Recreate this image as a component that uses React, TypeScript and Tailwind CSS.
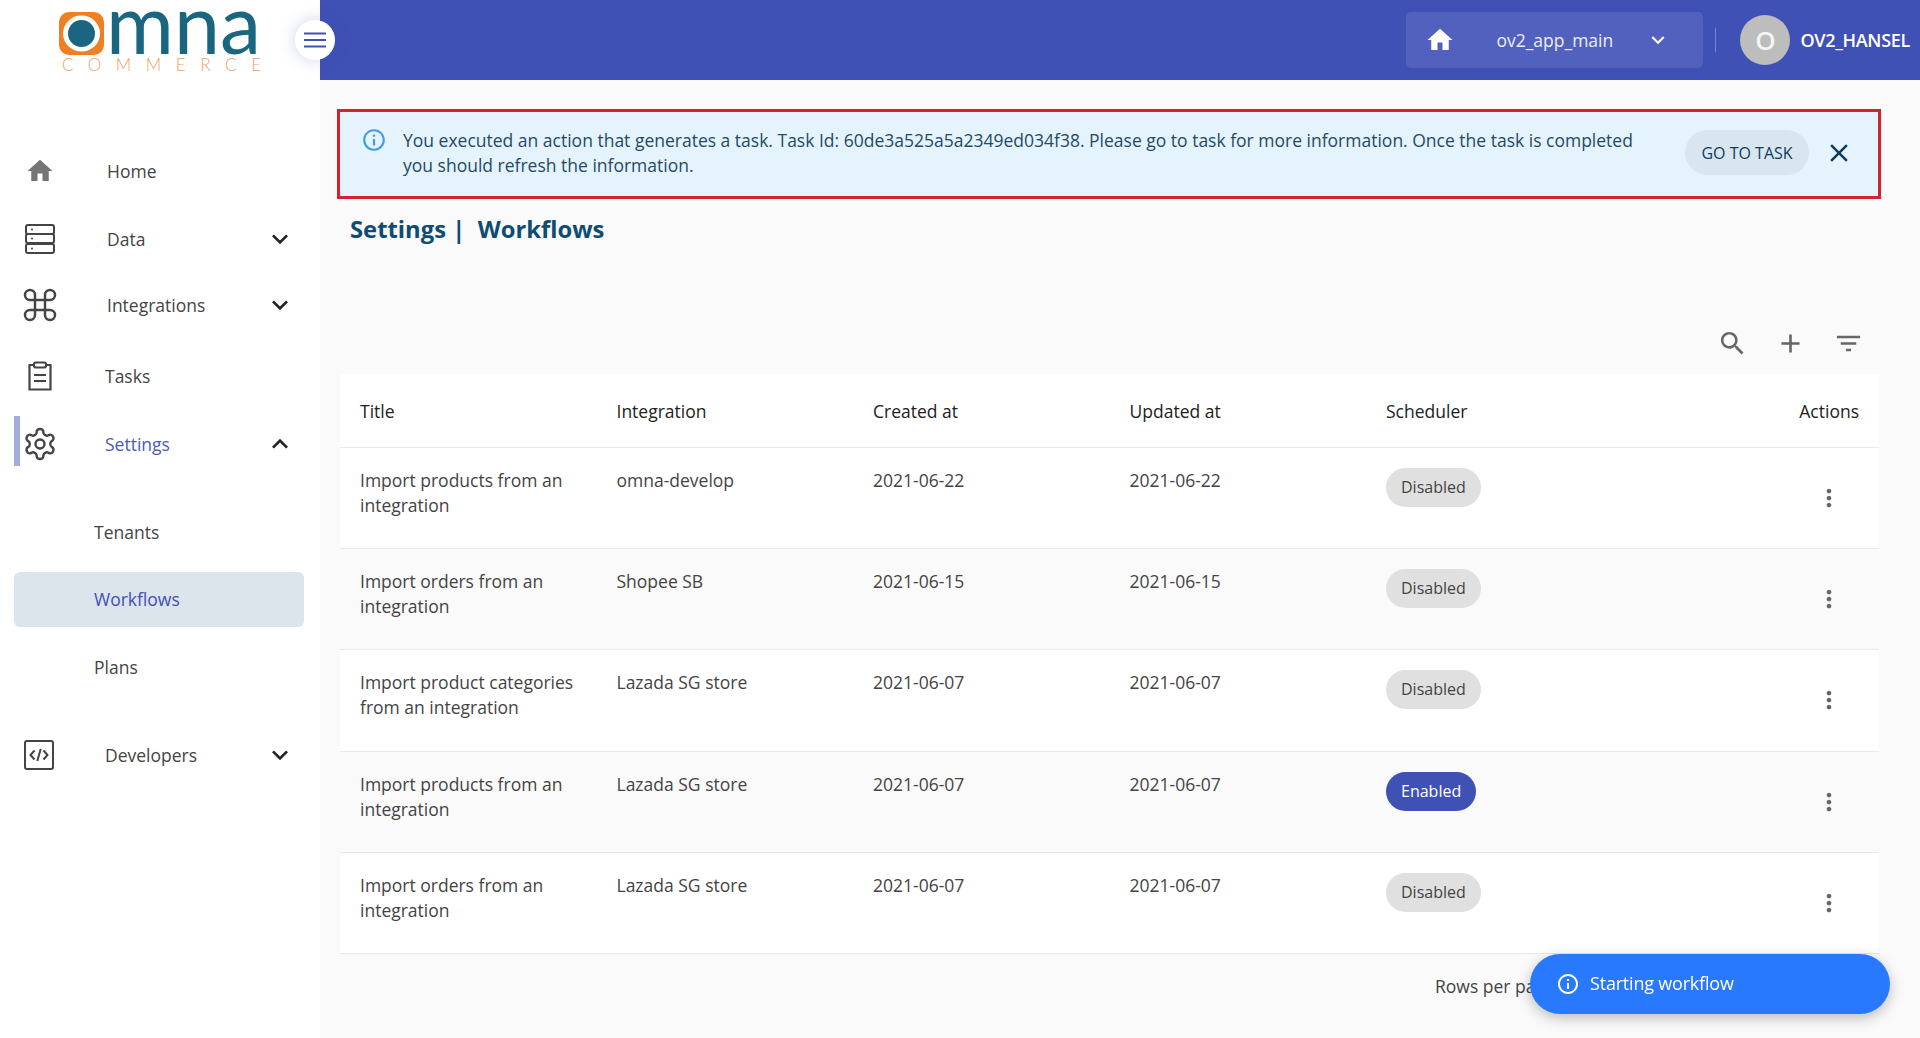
import React from "react";
import { MdHome, MdExpandMore, MdExpandLess, MdSearch, MdAdd, MdFilterList, MdMoreVert, MdClose, MdInfoOutline } from "react-icons/md";
import { LuCommand, LuSettings } from "react-icons/lu";

const ServerIcon = () => (
  <svg width="30" height="30" viewBox="0 0 30 30" fill="none" stroke="#444" strokeWidth="2">
    <rect x="1" y="1" width="28" height="9" rx="2" />
    <rect x="1" y="10" width="28" height="9" rx="2" />
    <rect x="1" y="20" width="28" height="9" rx="2" />
    <circle cx="7" cy="5.5" r="1" fill="#444" stroke="none" />
    <circle cx="7" cy="14.5" r="1" fill="#444" stroke="none" />
    <circle cx="7" cy="24.5" r="1" fill="#444" stroke="none" />
  </svg>
);
const ClipboardIcon = () => (
  <svg width="30" height="30" viewBox="0 0 30 30" fill="none" stroke="#444" strokeWidth="2.2">
    <path d="M9 4H4.5v24.5h21V4H21" />
    <rect x="9" y="1.5" width="12" height="5" rx="2" />
    <path d="M9 14h12M9 20h12" />
  </svg>
);
const CodeIcon = () => (
  <svg className="-ml-[2px] shrink-0" width="30" height="30" viewBox="0 0 30 30" fill="none" stroke="#444" strokeWidth="2">
    <rect x="1" y="1" width="28" height="28" rx="2" />
    <path d="M10.5 10.5 6.5 15l4 4.5M19.5 10.5l4 4.5-4 4.5M16.7 9l-3.4 12" strokeWidth="2" />
  </svg>
);

const Logo = () => (
  <svg width="280" height="76" viewBox="0 0 280 76">
    <rect x="59" y="12" width="45" height="43" rx="10" fill="#f07f23" />
    <ellipse cx="81.5" cy="33.5" rx="18.5" ry="18" fill="#fff" />
    <circle cx="81.5" cy="33.5" r="13.5" fill="#1a6580" />
    <text x="106" y="54" fontFamily="Lato, sans-serif" fontSize="84" fontWeight="400" fill="#1a6580" textLength="155" lengthAdjust="spacingAndGlyphs">mna</text>
    <text x="62" y="71" fontFamily="Lato, sans-serif" fontSize="17" fontWeight="300" fill="#f0a066" textLength="199" lengthAdjust="spacing">COMMERCE</text>
  </svg>
);

type NavProps = { h: string; icon: React.ReactNode; label: string; textCls: string; chev?: "down" | "up"; active?: boolean; cls?: string };
const NavItem = ({ h, icon, label, textCls, chev, active, cls }: NavProps) => (
  <div className={`relative flex items-center shrink-0 ${h} ${cls ?? ""}`}>
    {active && <div className="absolute left-[14px] top-[1px] w-[6px] h-[50px] bg-[#a3add9]" />}
    <div className="ml-[25px] w-[30px] h-[30px] flex items-center justify-center shrink-0">{icon}</div>
    <span className={`text-[17.5px] ${textCls} ${active ? "text-[#4a5bb8]" : "text-[#444]"}`}>{label}</span>
    {chev && (
      <div className="ml-auto mr-[24px] text-[#222]">
        {chev === "down" ? <MdExpandMore size={32} /> : <MdExpandLess size={32} />}
      </div>
    )}
  </div>
);

const rows = [
  ["Import products from an integration", "omna-develop", "2021-06-22", false],
  ["Import orders from an integration", "Shopee SB", "2021-06-15", false],
  ["Import product categories from an integration", "Lazada SG store", "2021-06-07", false],
  ["Import products from an integration", "Lazada SG store", "2021-06-07", true],
  ["Import orders from an integration", "Lazada SG store", "2021-06-07", false],
] as const;

export default function App() {
  return (
    <div className="flex h-screen overflow-hidden bg-[#fafafa] text-[#333]" style={{ fontFamily: '"Open Sans", sans-serif' }}>
      <aside className="relative w-[320px] shrink-0 bg-white flex flex-col">
        <div className="h-[137px] shrink-0 overflow-hidden"><Logo /></div>
        <NavItem h="h-[68px]" icon={<MdHome size={34} color="#757575" />} label="Home" textCls="ml-[52px]" />
        <NavItem h="h-[68px]" icon={<ServerIcon />} label="Data" textCls="ml-[52px]" chev="down" />
        <NavItem h="h-[64px]" icon={<LuCommand size={40} color="#444" strokeWidth={1.5} className="shrink-0" />} label="Integrations" textCls="ml-[52px]" chev="down" />
        <NavItem h="h-[78px]" icon={<ClipboardIcon />} label="Tasks" textCls="ml-[50px]" />
        <NavItem h="h-[58px]" icon={<LuSettings size={36} color="#444" strokeWidth={1.6} className="shrink-0" />} label="Settings" textCls="ml-[50px]" chev="up" active />
        <div className="mt-[32px] h-[55px] flex items-center pl-[94px] text-[17.5px] text-[#444]">Tenants</div>
        <div className="mt-[12px] ml-[14px] mr-[16px] h-[55px] flex items-center pl-[80px] text-[17.5px] text-[#3f51b5] bg-[#dce4ec] rounded-[6px]">Workflows</div>
        <div className="mt-[13px] h-[55px] flex items-center pl-[94px] text-[17.5px] text-[#444]">Plans</div>
        <NavItem h="h-[60px]" cls="mt-[30px]" icon={<CodeIcon />} label="Developers" textCls="ml-[50px]" chev="down" />
        <button className="absolute left-[295px] top-[20px] w-[40px] h-[40px] rounded-full bg-white shadow-[0_0_16px_rgba(63,81,181,0.25)] flex items-center justify-center z-10">
          <svg width="24" height="18" viewBox="0 0 24 18" stroke="#3f51b5" strokeWidth="2.2">
            <path d="M1 2.5h22M1 9h22M1 15.5h22" />
          </svg>
        </button>
      </aside>

      <main className="flex-1 min-w-0 flex flex-col">
        <header className="h-20 shrink-0 bg-[#3f51b5] flex items-center text-white">
          <div className="ml-auto w-[297px] h-[56px] bg-[#5261bd] rounded-[5px] flex items-center pl-[19px] pr-[32px]">
            <MdHome size={30} />
            <span className="ml-[41px] text-[17.5px] text-[#eceefa]">ov2_app_main</span>
            <MdExpandMore size={26} className="ml-auto" />
          </div>
          <div className="w-px h-[24px] bg-white/30 ml-[12px]" />
          <div className="ml-[24px] w-[50px] h-[50px] rounded-full bg-[#bdbdbd] flex items-center justify-center text-[26px] font-semibold text-[#f5f5f5]">O</div>
          <span className="ml-[10px] mr-[10px] text-[18px] font-semibold tracking-[-0.3px] whitespace-nowrap">OV2_HANSEL</span>
        </header>

        <div className="mt-[29px] ml-[17px] mr-[39px] h-[90px] shrink-0 border-[3px] border-[#d3222f] bg-[#e5f3fd] flex text-[#254a66]">
          <MdInfoOutline size={26} className="ml-[21px] mt-[15px] text-[#3f9ce8] shrink-0" />
          <p className="ml-[16px] mt-[16px] w-[1250px] text-[17.5px] leading-[25px]">
            You executed an action that generates a task. Task Id: 60de3a525a5a2349ed034f38. Please go to task for more information. Once the task is completed you should refresh the information.
          </p>
          <button className="ml-[32px] mt-[18px] w-[124px] h-[45px] shrink-0 rounded-full bg-[#d9e6ef] text-[16px] font-medium text-[#0d3c61]">GO TO TASK</button>
          <MdClose size={30} className="ml-[15px] mt-[26px] text-[#0d3c61] shrink-0" />
        </div>

        <h1 className="mt-[12px] ml-[30px] h-[36px] text-[23.8px] leading-[36px] font-bold text-[#0f4c75] whitespace-pre shrink-0">
          Settings |  Workflows
        </h1>

        <div className="mt-[76px] mr-[41px] h-[40px] flex items-center justify-end gap-[27px] pr-[15px] text-[#666] shrink-0">
          <MdSearch size={31} />
          <MdAdd size={31} />
          <MdFilterList size={31} />
        </div>

        <div className="mt-[11px] ml-[20px] mr-[41px]">
          <table className="w-full table-fixed border-collapse text-[17.5px] leading-[25px] text-[#444]">
            <thead>
              <tr className="h-[73px] bg-white border-b border-[#e8e8ee] text-left text-[#222]">
                {["Title", "Integration", "Created at", "Updated at", "Scheduler"].map((t) => (
                  <th key={t} className="pl-[20px] pr-[20px] pt-[2px] font-medium">{t}</th>
                ))}
                <th className="pr-[20px] pt-[2px] font-medium text-right">Actions</th>
              </tr>
            </thead>
            <tbody>
              {rows.map((r, i) => (
                <tr key={i} className={`h-[101.4px] border-b border-[#e8e8ee] ${i % 2 === 0 ? "bg-white" : "bg-[#fafafa]"}`}>
                  <td className="align-top pt-[20px] pl-[20px] pr-[20px]">{r[0]}</td>
                  <td className="align-top pt-[20px] pl-[20px] pr-[20px]">{r[1]}</td>
                  <td className="align-top pt-[20px] pl-[20px] pr-[20px]">{r[2]}</td>
                  <td className="align-top pt-[20px] pl-[20px] pr-[20px]">{r[2]}</td>
                  <td className="align-top pt-[20px] pl-[20px]">
                    {r[3] ? (
                      <span className="inline-flex items-center h-[39px] px-[15px] rounded-full bg-[#3f51b5] text-white text-[16px]">Enabled</span>
                    ) : (
                      <span className="inline-flex items-center h-[39px] px-[15px] rounded-full bg-[#e0e0e0] text-[#444] text-[16px]">Disabled</span>
                    )}
                  </td>
                  <td className="align-middle pr-[20px]">
                    <div className="ml-auto w-[61px] flex justify-center text-[#666]"><MdMoreVert size={28} /></div>
                  </td>
                </tr>
              ))}
            </tbody>
          </table>
          <div className="mt-[19px] pl-[1095px] text-[17.5px] text-[#444] whitespace-nowrap">Rows per page</div>
        </div>

        <div className="fixed left-[1530px] top-[954px] w-[360px] h-[60px] rounded-[30px] bg-[#2979ff] flex items-center pl-[26px] text-white shadow-[0_4px_14px_rgba(0,0,0,0.25)]">
          <MdInfoOutline size={24} />
          <span className="ml-[10px] text-[18px] font-medium tracking-[-0.2px] -mt-[1px]">Starting workflow</span>
        </div>
      </main>
    </div>
  );
}
